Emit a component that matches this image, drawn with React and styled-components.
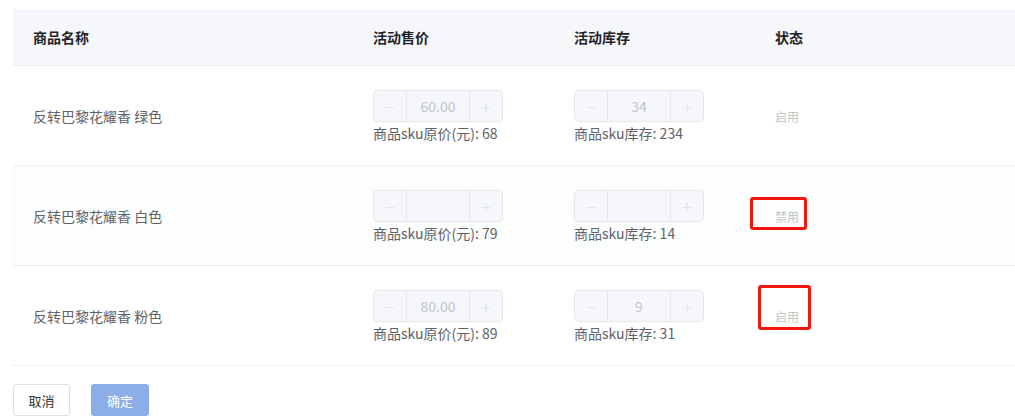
import React from "react";
import styled, { createGlobalStyle } from "styled-components";

const Global = createGlobalStyle`
  html, body { margin: 0; padding: 0; background: #fff; }
  body { font-family: "Noto Sans CJK SC", "Liberation Sans", Arial, sans-serif; }
`;

const Page = styled.div`
  padding: 9px 0 0 13px;
  width: 1002px;
`;

const Table = styled.div`
  width: 100%;
`;

const Grid = styled.div`
  display: grid;
  grid-template-columns: 340px 201px 201px 1fr;
  align-items: center;
  height: ${(p) => p.$h}px;
  background: ${(p) => p.$bg || "#fff"};
  border-bottom: 1px solid #ebeef5;
  box-sizing: border-box;
`;

const HeadCell = styled.div`
  padding-left: 20px;
  font-size: 14px;
  font-weight: bold;
  color: #1f2329;
`;

const Cell = styled.div`
  padding-left: 20px;
  font-size: 14px;
  color: #606266;
  position: relative;
`;

const NumberBox = styled.div`
  display: flex;
  width: 130px;
  height: 32px;
  box-sizing: border-box;
  border: 1px solid #e4e7ed;
  border-radius: 4px;
  background: #f5f7fa;
  margin-top: 2px;
`;

const Step = styled.div`
  width: 32px;
  display: flex;
  align-items: center;
  justify-content: center;
  color: #dfe3ea;
  font-size: 18px;
  font-weight: 300;
  border-left: ${(p) => (p.$side === "right" ? "1px solid #e4e7ed" : "none")};
  border-right: ${(p) => (p.$side === "left" ? "1px solid #e4e7ed" : "none")};
`;

const Value = styled.div`
  flex: 1;
  display: flex;
  align-items: center;
  justify-content: center;
  color: #c0c4cc;
  font-size: 14px;
`;

const Note = styled.div`
  font-size: 14px;
  color: #606266;
  line-height: 20px;
  margin-top: 1px;
`;

const Status = styled.span`
  font-size: 12px;
  color: #c0c4cc;
  display: inline-block;
`;

const Mark = styled.div`
  position: absolute;
  border: 3px solid #f5150f;
  border-radius: 3px;
  left: ${(p) => p.$x}px;
  top: ${(p) => p.$y}px;
  width: ${(p) => p.$w}px;
  height: ${(p) => p.$hh}px;
  box-sizing: border-box;
`;

const Footer = styled.div`
  display: flex;
  gap: 21px;
  margin-top: 18px;
`;

const Button = styled.button`
  height: 32px;
  padding: 0 14px;
  font-size: 13px;
  font-family: inherit;
  border-radius: 3px;
  border: 1px solid ${(p) => (p.$primary ? "#8caee8" : "#dcdfe6")};
  background: ${(p) => (p.$primary ? "#8caee8" : "#fff")};
  color: ${(p) => (p.$primary ? "#fff" : "#303133")};
  width: ${(p) => p.$w}px;
`;

const rows = [
  { name: "反转巴黎花耀香 绿色", price: "60.00", orig: 68, stock: "34", sku: 234, status: "启用" },
  { name: "反转巴黎花耀香 白色", price: "", orig: 79, stock: "", sku: 14, status: "禁用", bg: "#fcfdfd",
    mark: { x: -5, y: -9, w: 57, hh: 33 } },
  { name: "反转巴黎花耀香 粉色", price: "80.00", orig: 89, stock: "9", sku: 31, status: "启用",
    mark: { x: 3, y: -21, w: 53, hh: 45 } },
];

function NumberInput({ value }) {
  return (
    <NumberBox>
      <Step $side="left">−</Step>
      <Value>{value}</Value>
      <Step $side="right">+</Step>
    </NumberBox>
  );
}

export default function App() {
  return (
    <>
      <Global />
      <Page>
        <Table>
          <Grid $h={57} $bg="#f5f7fa">
            <HeadCell>商品名称</HeadCell>
            <HeadCell>活动售价</HeadCell>
            <HeadCell>活动库存</HeadCell>
            <HeadCell>状态</HeadCell>
          </Grid>
          {rows.map((r) => (
            <Grid key={r.name} $h={100} $bg={r.bg}>
              <Cell>{r.name}</Cell>
              <Cell>
                <NumberInput value={r.price} />
                <Note>商品sku原价(元): {r.orig}</Note>
              </Cell>
              <Cell>
                <NumberInput value={r.stock} />
                <Note>商品sku库存: {r.sku}</Note>
              </Cell>
              <Cell>
                <Status>{r.status}</Status>
                {r.mark && <Mark $x={r.mark.x} $y={r.mark.y} $w={r.mark.w} $hh={r.mark.hh} />}
              </Cell>
            </Grid>
          ))}
        </Table>
        <Footer>
          <Button $w={57}>取消</Button>
          <Button $primary $w={58}>确定</Button>
        </Footer>
      </Page>
    </>
  );
}
